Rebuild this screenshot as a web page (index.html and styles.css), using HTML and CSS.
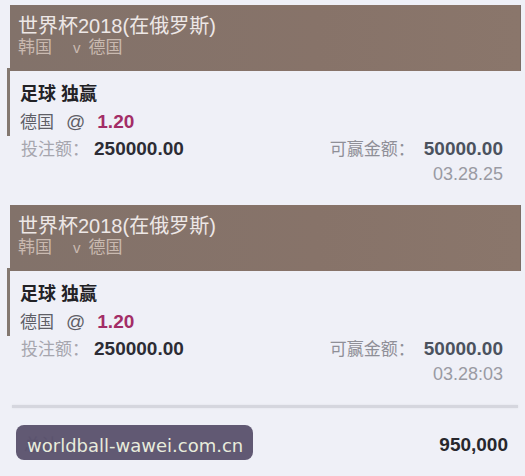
FILE: index.html
```html
<!DOCTYPE html>
<html lang="zh-CN">
<head>
<meta charset="utf-8">
<title>投注记录</title>
<link rel="stylesheet" href="styles.css">
</head>
<body>
<div class="page">
  <section class="bet">
    <header class="bet-head">
      <div class="league">世界杯2018(在俄罗斯)</div>
      <div class="match"><span>韩国</span><span class="vs">v</span><span>德国</span></div>
    </header>
    <div class="sel">
      <div class="market">足球 独赢</div>
      <div class="pick"><span>德国</span><span class="at">@</span><span class="odds">1.20</span></div>
    </div>
    <div class="amounts">
      <div class="stake"><span class="label">投注额：</span><span class="value">250000.00</span></div>
      <div class="win"><span class="label win-label">可赢金额：</span><span class="value win-value">50000.00</span></div>
    </div>
    <div class="time">03.28.25</div>
  </section>

  <section class="bet">
    <header class="bet-head">
      <div class="league">世界杯2018(在俄罗斯)</div>
      <div class="match"><span>韩国</span><span class="vs">v</span><span>德国</span></div>
    </header>
    <div class="sel">
      <div class="market">足球 独赢</div>
      <div class="pick"><span>德国</span><span class="at">@</span><span class="odds">1.20</span></div>
    </div>
    <div class="amounts">
      <div class="stake"><span class="label">投注额：</span><span class="value">250000.00</span></div>
      <div class="win"><span class="label win-label">可赢金额：</span><span class="value win-value">50000.00</span></div>
    </div>
    <div class="time">03.28:03</div>
  </section>

  <div class="divider"></div>

  <div class="total">
    <span class="total-label">总计</span>
    <span class="total-value">950,000</span>
  </div>

  <div class="watermark">worldball-wawei.com.cn</div>
</div>
</body>
</html>
```

FILE: styles.css
```css
* {
  box-sizing: border-box;
}

html,
body {
  margin: 0;
  padding: 0;
  background: #eff0f7;
}

body {
  font-family: "Liberation Sans", "Noto Sans CJK SC", sans-serif;
  color: #2c2c34;
}

.page {
  position: relative;
  width: 525px;
  height: 476px;
  padding-top: 5px;
  overflow: hidden;
}

.bet {
  margin: 0 4px 19px 10px;
}

.bet-head {
  height: 66px;
  padding: 9px 8px 0;
  background: linear-gradient(90deg, #82726a 0%, #877369 60%, #8a766b 100%);
  border-right: 1px solid #7b6d66;
}

.league {
  font-size: 20px;
  line-height: 24px;
  color: #ede7e6;
}

.match {
  font-size: 17px;
  line-height: 20px;
  color: #c9b9b0;
  display: flex;
}

.match .vs {
  font-size: 15px;
  margin: 0 8px 0 21px;
}

.sel {
  margin: -3px 0 0 -3px;
  padding: 13px 0 0 10px;
  border-left: 3px solid #837870;
}

.market {
  font-size: 18px;
  line-height: 27px;
  font-weight: bold;
  color: #222226;
}

.pick {
  font-size: 17px;
  line-height: 27px;
  color: #5f5f67;
  display: flex;
  align-items: baseline;
}

.pick .at {
  font-size: 19px;
  margin: 0 12px 0 12px;
}

.pick .odds {
  font-size: 19px;
  font-weight: bold;
  color: #a32d66;
}

.amounts {
  display: flex;
  justify-content: space-between;
  align-items: baseline;
  padding: 0 18px 0 11px;
  line-height: 25px;
}

.label {
  font-size: 17px;
  color: #a6a6ae;
}

.value {
  font-size: 19px;
  font-weight: bold;
  color: #2c2c34;
  margin-left: 5px;
}

.win-label {
  color: #8f8f97;
}

.win-value {
  color: #4b525e;
  margin-left: 9px;
}

.time {
  text-align: right;
  padding-right: 18px;
  font-size: 18px;
  line-height: 24px;
  color: #9a9aa3;
}

.divider {
  height: 3px;
  margin: 0 7px 0 12px;
  background: #d5d6de;
  box-shadow: 0 0 2px #dcdde4;
}

.total {
  display: flex;
  justify-content: space-between;
  align-items: baseline;
  margin: 24px 17px 0 24px;
  line-height: 26px;
}

.total-label {
  font-size: 17px;
  color: #8a8a92;
}

.total-value {
  font-size: 19px;
  font-weight: bold;
  color: #27272d;
}

/* site stamp floating over the totals row */
.watermark {
  position: absolute;
  left: 16px;
  top: 425px;
  width: 237px;
  height: 35px;
  padding: 10px 0 0 11px;
  border-radius: 8px;
  background: rgba(88, 80, 108, 0.95);
  font-family: "DejaVu Sans", sans-serif;
  font-size: 18px;
  line-height: 22px;
  color: #e8ecdc;
  white-space: nowrap;
}
```
